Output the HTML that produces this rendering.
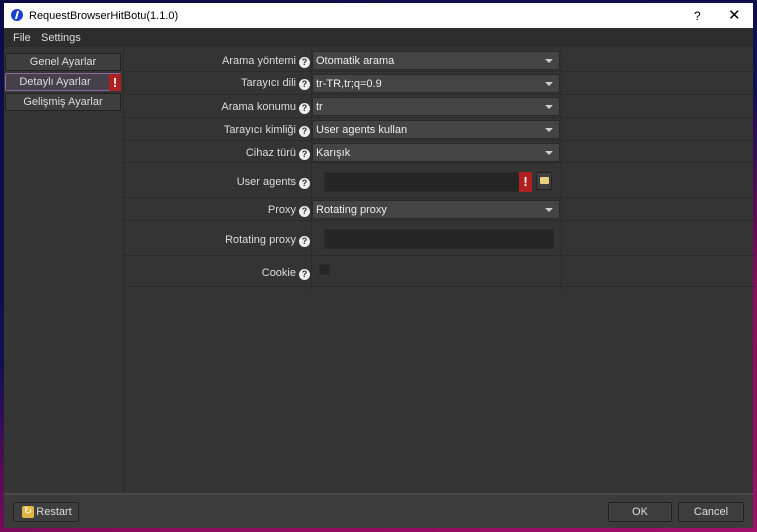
<!DOCTYPE html>
<html><head><meta charset="utf-8"><style>
*{box-sizing:border-box;margin:0;padding:0}
body{width:757px;height:532px;overflow:hidden;position:relative;font-family:"Liberation Sans",sans-serif;font-size:11px;color:#ddd;
background:linear-gradient(160deg,#0c0c45 0%,#101050 45%,#8a0a5a 70%,#a0106a 100%);}
.win{position:absolute;left:4px;top:3px;width:749px;height:525px;background:#353535;}
.title{position:absolute;left:0;top:0;width:749px;height:25px;background:#fff;color:#000;font-size:11px;}
.title .ic{position:absolute;left:7px;top:6px;width:12px;height:12px;border-radius:50%;background:#1a3fd0;}
.title .ic:after{content:"";position:absolute;left:5px;top:2px;width:2px;height:8px;background:#fff;transform:skewX(-15deg)}
.title .t{position:absolute;left:25px;top:7px}
.title .q{position:absolute;left:690px;top:6px;font-size:12px}
.title .x{position:absolute;left:724px;top:3px;font-size:15px}
.menu{position:absolute;top:25px;left:0;width:749px;height:19px;background:#2d2d2d;}
.menu span{position:absolute;top:4px}
.nav{position:absolute;left:0;top:44px;width:119px;height:446px;background:#353535}
.btn{position:absolute;background:#3e3e3e;border:1px solid #222;border-radius:2px;text-align:center;color:#ddd;height:18px;line-height:16px}
.content{position:absolute;left:119px;top:44px;width:630px;height:446px;background:#343434;border-left:1px solid #2a2a2a;}
.row{position:absolute;left:0;width:630px;border-bottom:1px solid #2a2a2a;}
.lab{position:absolute;right:444px;text-align:right;white-space:nowrap;line-height:12px}
.qm{display:inline-block;width:11px;height:11px;border-radius:50%;background:#eee;color:#333;font-size:9px;font-weight:bold;line-height:11px;text-align:center;margin-left:3px;vertical-align:-1px}
.vline{position:absolute;top:2px;width:1px;height:240px;background:#2a2a2a}
.combo{position:absolute;left:188px;width:248px;height:19px;background:#444;border:1px solid #2a2a2a;border-radius:2px;padding-left:3px;display:flex;align-items:center;color:#eee}
.combo:after{content:"";position:absolute;right:6px;top:7px;border-left:4px solid transparent;border-right:4px solid transparent;border-top:4px solid #ccc}
.edit{position:absolute;background:#262626;border:1px solid #2b2b2b;border-radius:2px}
.bang{position:absolute;background:#b02020;color:#fff;font-weight:bold;text-align:center;font-size:13px}
.bottom{position:absolute;left:0;top:490px;width:749px;height:35px;background:#3b3b3b;border-top:2px solid #4a4a4a}
</style></head><body>
<div class="win">
 <div class="title"><div class="ic"></div><div class="t">RequestBrowserHitBotu(1.1.0)</div><div class="q">?</div><div class="x">✕</div></div>
 <div class="menu"><span style="left:9px">File</span><span style="left:37px">Settings</span></div>
 <div class="nav">
  <div class="btn" style="left:1px;top:6px;width:116px">Genel Ayarlar</div>
  <div class="btn" style="left:1px;top:26px;width:116px;background:#45404a;border-color:#8a6aa0;padding-right:16px">Detaylı Ayarlar</div>
  <div class="bang" style="left:105px;top:27px;width:12px;height:17px;line-height:17px">!</div>
  <div class="btn" style="left:1px;top:46px;width:116px">Gelişmiş Ayarlar</div>
 </div>
 <div class="content">
  <div class="vline" style="left:187px"></div>
  <div class="vline" style="left:437px"></div>
  <div class="row" style="top:2px;height:23px"><div class="lab" style="top:6px">Arama yöntemi<span class="qm">?</span></div><div class="combo" style="top:2px">Otomatik arama</div></div>
  <div class="row" style="top:25px;height:23px"><div class="lab" style="top:5px">Tarayıcı dili<span class="qm">?</span></div><div class="combo" style="top:2px">tr-TR,tr;q=0.9</div></div>
  <div class="row" style="top:48px;height:23px"><div class="lab" style="top:6px">Arama konumu<span class="qm">?</span></div><div class="combo" style="top:2px">tr</div></div>
  <div class="row" style="top:71px;height:23px"><div class="lab" style="top:6px">Tarayıcı kimliği<span class="qm">?</span></div><div class="combo" style="top:2px">User agents kullan</div></div>
  <div class="row" style="top:94px;height:22px"><div class="lab" style="top:6px">Cihaz türü<span class="qm">?</span></div><div class="combo" style="top:2px">Karışık</div></div>
  <div class="row" style="top:116px;height:35px"><div class="lab" style="top:13px">User agents<span class="qm">?</span></div>
   <div class="edit" style="left:200px;top:9px;width:196px;height:20px"></div>
   <div class="bang" style="left:395px;top:9px;width:13px;height:20px;line-height:20px">!</div>
   <div class="btn" style="left:412px;top:9px;width:16px;height:18px"><div style="position:absolute;left:3px;top:4px;width:9px;height:7px;background:#e8d080;border-radius:1px"></div></div>
  </div>
  <div class="row" style="top:151px;height:23px"><div class="lab" style="top:6px">Proxy<span class="qm">?</span></div><div class="combo" style="top:2px">Rotating proxy</div></div>
  <div class="row" style="top:174px;height:35px"><div class="lab" style="top:13px">Rotating proxy<span class="qm">?</span></div><div class="edit" style="left:200px;top:8px;width:230px;height:20px"></div></div>
  <div class="row" style="top:209px;height:31px"><div class="lab" style="top:11px">Cookie<span class="qm">?</span></div><div class="edit" style="left:195px;top:8px;width:11px;height:11px"></div></div>
 </div>
 <div class="bottom">
  <div class="btn" style="left:9px;top:7px;width:66px;height:20px;line-height:18px;padding-left:16px">Restart</div>
  <div style="position:absolute;left:18px;top:11px;width:12px;height:12px;background:#e0b840;border-radius:2px;color:#fff;font-size:10px;line-height:12px;text-align:center">↻</div>
  <div class="btn" style="left:604px;top:7px;width:64px;height:20px;line-height:18px">OK</div>
  <div class="btn" style="left:674px;top:7px;width:66px;height:20px;line-height:18px">Cancel</div>
 </div>
</div>
</body></html>
